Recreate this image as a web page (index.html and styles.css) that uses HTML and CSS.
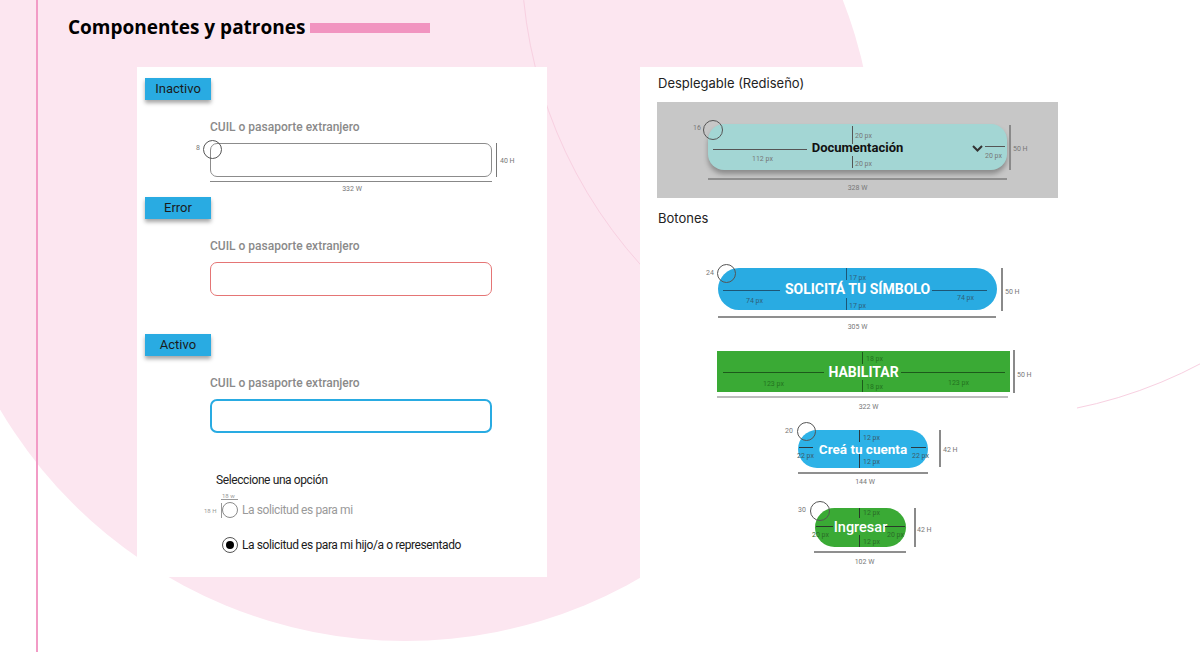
FILE: index.html
```html
<!DOCTYPE html>
<html lang="es">
<head>
<meta charset="utf-8">
<title>Componentes y patrones</title>
<link rel="stylesheet" href="styles.css">
</head>
<body>
<div class="page">
  <div class="bg-circle"></div>
  <div class="bg-arc"></div>
  <div class="frame">
    <header class="title-row">
      <h1 class="title">Componentes y patrones</h1>
      <span class="title-bar"></span>
    </header>
    <div class="boards">
      <section class="card card-left">
        <div class="state">
          <span class="tag">Inactivo</span>
          <span class="field-label">CUIL o pasaporte extranjero</span>
          <div class="field field-inactive">
            <span class="ring f-ring"></span><span class="mt f-r">8</span>
            <span class="mk f-ht"></span><span class="mt f-ht-t">40 H</span>
            <span class="mk f-wd"></span><span class="mt f-wd-t">332 W</span>
          </div>
        </div>
        <div class="state">
          <span class="tag">Error</span>
          <span class="field-label">CUIL o pasaporte extranjero</span>
          <div class="field field-error"></div>
        </div>
        <div class="state state-active">
          <span class="tag">Activo</span>
          <span class="field-label">CUIL o pasaporte extranjero</span>
          <div class="field field-active"></div>
        </div>
        <div class="options">
          <div class="options-title">Seleccione una opción</div>
          <div class="radio-row radio-row-off">
            <span class="radio">
              <span class="mt r-w">18 w</span><span class="mk r-wl"></span>
              <span class="mt r-h">18 H</span><span class="mk r-hl"></span>
            </span>
            <span>La solicitud es para mi</span>
          </div>
          <div class="radio-row radio-row-on">
            <span class="radio radio-on"></span>
            <span>La solicitud es para mi hijo/a o representado</span>
          </div>
        </div>
      </section>

      <section class="card card-right">
        <h2 class="section-title">Desplegable (Rediseño)</h2>
        <div class="dd-box">
          <div class="dropdown">
            <span>Documentación</span>
            <span class="ring dd-ring"></span><span class="mt dd-r">16</span>
            <span class="mk dd-ln dd-vt"></span><span class="mt dd-vt-t">20 px</span>
            <span class="mk dd-ln dd-vb"></span><span class="mt dd-vb-t">20 px</span>
            <span class="mk dd-ln dd-hl"></span><span class="mt dd-hl-t">112 px</span>
            <svg class="chev" width="11" height="7" viewBox="0 0 11 7"><polyline points="1,1 5.5,5.5 10,1" fill="none" stroke="#333" stroke-width="2"/></svg>
            <span class="mk dd-ln dd-hr"></span><span class="mt dd-hr-t">20 px</span>
            <span class="mk out-v dd-ht"></span><span class="mt dd-ht-t">50 H</span>
            <span class="mk out-h dd-wd"></span><span class="mt wd-t dd-wd-t">328 W</span>
          </div>
        </div>
        <h2 class="section-title botones">Botones</h2>

        <div class="btn btn-solicita">
          <span>SOLICITÁ TU SÍMBOLO</span>
          <span class="ring b1-ring"></span><span class="mt b1-r">24</span>
          <span class="mk b1-ln b1-vt"></span><span class="mt b1-t b1-vt-t">17 px</span>
          <span class="mk b1-ln b1-vb"></span><span class="mt b1-t b1-vb-t">17 px</span>
          <span class="mk b1-ln b1-hl"></span><span class="mt b1-t b1-hl-t">74 px</span>
          <span class="mk b1-ln b1-hr"></span><span class="mt b1-t b1-hr-t">74 px</span>
          <span class="mk out-v b1-ht"></span><span class="mt b1-ht-t">50 H</span>
          <span class="mk out-h b1-wd"></span><span class="mt wd-t b1-wd-t">305 W</span>
        </div>

        <div class="btn btn-habilitar">
          <span>HABILITAR</span>
          <span class="mk b2-ln b2-vt"></span><span class="mt b2-t b2-vt-t">18 px</span>
          <span class="mk b2-ln b2-vb"></span><span class="mt b2-t b2-vb-t">18 px</span>
          <span class="mk b2-ln b2-hl"></span><span class="mt b2-t b2-hl-t">123 px</span>
          <span class="mk b2-ln b2-hr"></span><span class="mt b2-t b2-hr-t">123 px</span>
          <span class="mk out-v b2-ht"></span><span class="mt b2-ht-t">50 H</span>
          <span class="mk out-h b2-wd"></span><span class="mt wd-t b2-wd-t">322 W</span>
        </div>

        <div class="btn btn-crea">
          <span>Creá tu cuenta</span>
          <span class="ring b3-ring"></span><span class="mt b3-r">20</span>
          <span class="mk b3-ln b3-vt"></span><span class="mt b3-t b3-vt-t">12 px</span>
          <span class="mk b3-ln b3-vb"></span><span class="mt b3-t b3-vb-t">12 px</span>
          <span class="mk b3-ln b3-hl"></span><span class="mt b3-t b3-hl-t">22 px</span>
          <span class="mk b3-ln b3-hr"></span><span class="mt b3-t b3-hr-t">22 px</span>
          <span class="mk out-v b3-ht"></span><span class="mt b3-ht-t">42 H</span>
          <span class="mk out-h b3-wd"></span><span class="mt wd-t b3-wd-t">144 W</span>
        </div>

        <div class="btn btn-ingresar">
          <span>Ingresar</span>
          <span class="ring b4-ring"></span><span class="mt b4-r">30</span>
          <span class="mk b4-ln b4-vt"></span><span class="mt b4-t b4-vt-t">12 px</span>
          <span class="mk b4-ln b4-vb"></span><span class="mt b4-t b4-vb-t">12 px</span>
          <span class="mk b4-ln b4-hl"></span><span class="mt b4-t b4-hl-t">20 px</span>
          <span class="mk b4-ln b4-hr"></span><span class="mt b4-t b4-hr-t">20 px</span>
          <span class="mk out-v b4-ht"></span><span class="mt b4-ht-t">42 H</span>
          <span class="mk out-h b4-wd"></span><span class="mt wd-t b4-wd-t">102 W</span>
        </div>
      </section>
    </div>
  </div>
</div>
</body>
</html>
```
FILE: styles.css
```css
* { box-sizing: border-box; }
body { margin: 0; font-family: Roboto, "Liberation Sans", sans-serif; }

.page { position: relative; width: 1200px; height: 652px; overflow: hidden; background: #fff; }

/* decorative background */
.bg-circle { position: absolute; left: -65px; top: -299px; width: 940px; height: 940px; border-radius: 50%; background: #fce6f0; }
.bg-arc { position: absolute; left: 521px; top: -508px; width: 926px; height: 926px; border-radius: 50%; border: 1.5px solid #f8d0e1; }

.frame { position: relative; z-index: 1; margin-left: 36px; height: 652px; border-left: 2px solid #f29bc6; }

.title-row { display: flex; align-items: flex-start; gap: 5px; height: 67px; padding: 15px 0 0 30px; }
.title { margin: 0; font: 700 19px/24px "Open Sans", sans-serif; color: #000; }
.title-bar { width: 120px; height: 10px; margin-top: 8px; background: #f194c0; }

.boards { display: flex; gap: 93px; padding-left: 99px; }
.card { background: #fff; }
.card-left { width: 410px; height: 510px; padding: 11px 0 0 8px; }
.card-right { width: 437px; height: 585px; padding-top: 8px; }

/* left card */
.state + .state { margin-top: 20px; }
.state.state-active { margin-top: 38px; }
.tag { display: block; width: 66px; height: 22px; background: #29abe2; color: #1b1b1b; font-size: 13px; line-height: 22px; text-align: center; box-shadow: 0 3px 4px rgba(0,0,0,0.35); }
.field-label { display: block; margin: 20px 0 0 65px; font-size: 12px; line-height: 15px; font-weight: 500; color: #8a8a8a; }
.field { position: relative; width: 282px; height: 34px; margin: 8px 0 0 65px; border-radius: 7px; background: #fff; }
.field-inactive { border: 1px solid #8c8c8c; }
.field-error { border: 1.5px solid #e57575; }
.field-active { border: 2px solid #29abe2; }

.options { margin: 40px 0 0 71px; letter-spacing: -0.4px; }
.options-title { font-size: 12px; line-height: 15px; color: #222; }
.radio-row { display: flex; align-items: center; gap: 4px; height: 18px; margin-left: 6px; font-size: 12px; }
.radio-row-off { margin-top: 13px; color: #9a9a9a; }
.radio-row-on { margin-top: 17px; color: #1a1a1a; }
.radio { position: relative; flex: none; width: 16px; height: 16px; border-radius: 50%; border: 1.2px solid #8a8a8a; letter-spacing: 0; }
.radio-on { border: 1.5px solid #555; }
.radio-on::after { content: ""; position: absolute; left: 50%; top: 50%; width: 8px; height: 8px; margin: -4px 0 0 -4px; border-radius: 50%; background: #000; }

/* annotation primitives */
.mk { position: absolute; display: block; background: #555; }
.mt { position: absolute; font: 400 7px/8px Roboto, sans-serif; color: #777; white-space: nowrap; letter-spacing: 0; }
.ring { position: absolute; border: 1px solid #555; border-radius: 50%; }
.out-v { width: 1.5px; background: #8a8a8a; }
.out-h { height: 1.5px; background: #8f8f8f; }
.wd-t { left: 0; right: 0; text-align: center; }

/* field annotations */
.f-ring { left: -8px; top: -4px; width: 19px; height: 19px; }
.f-r { left: -15px; top: 0; }
.f-ht { left: 285px; top: -1px; width: 1px; height: 34px; background: #777; }
.f-ht-t { left: 289px; top: 13px; }
.f-wd { left: -1px; top: 37px; width: 282px; height: 1px; background: #888; }
.f-wd-t { left: 0; width: 282px; top: 41px; text-align: center; }

/* radio annotations */
.r-w { left: -1px; top: -11px; font-size: 6px; color: #999; }
.r-wl { left: -2px; top: -4px; width: 17px; height: 1px; background: #999; }
.r-h { left: -19px; top: 4px; font-size: 6px; color: #999; }
.r-hl { left: -2px; top: 0; width: 1px; height: 15px; background: #999; }

/* right card */
.section-title { margin: 0 0 0 18px; font: 400 13px/16px Inter, Roboto, sans-serif; color: #222; }
.section-title.botones { margin-top: 12px; }
.dd-box { width: 401px; height: 96px; margin: 11px 0 0 17px; padding: 22px 0 0 51px; background: #c7c7c7; }
.dropdown { position: relative; display: flex; align-items: center; justify-content: center; width: 299px; height: 46px; border-radius: 16px; background: #a3d6d4; box-shadow: 0 4px 5px rgba(0,0,0,0.3); font-weight: 700; font-size: 13px; color: #111; padding-top: 1px; }
.chev { position: absolute; left: 264px; top: 21px; }

.dd-ln { background: #555; }
.dd-ring { left: -5px; top: -4px; width: 20px; height: 20px; }
.dd-r { left: -15px; top: 0; }
.dd-vt { left: 144px; top: 2px; width: 1px; height: 18px; }
.dd-vt-t { left: 147px; top: 8px; }
.dd-vb { left: 144px; top: 32px; width: 1px; height: 12px; }
.dd-vb-t { left: 147px; top: 36px; }
.dd-hl { left: 5px; top: 25px; width: 94px; height: 1px; }
.dd-hl-t { left: 44px; top: 31px; }
.dd-hr { left: 277px; top: 22px; width: 20px; height: 1px; }
.dd-hr-t { left: 277px; top: 28px; }
.dd-ht { left: 301px; top: 1px; height: 45px; }
.dd-ht-t { left: 305px; top: 21px; }
.dd-wd { left: 0; top: 54px; width: 299px; }
.dd-wd-t { top: 60px; }

/* buttons */
.btn { position: relative; display: flex; align-items: center; justify-content: center; color: #fff; font-weight: 700; }
.btn-solicita { width: 279px; height: 42px; margin: 42px 0 0 78px; border-radius: 21px; background: #29abe2; font-size: 14px; }
.btn-habilitar { width: 293px; height: 41px; margin: 41px 0 0 77px; background: #3aaa35; font-size: 14px; }
.btn-crea { width: 130px; height: 38px; margin: 38px 0 0 158px; border-radius: 19px; background: #2db2e7; font-size: 13.5px; }
.btn-ingresar { width: 91px; height: 39px; margin: 40px 0 0 175px; border-radius: 20px; background: #3aaa35; font-size: 14.5px; font-weight: 500; }

.b1-ln { background: #1d5676; }
.b1-t { color: #2f5f78; }
.b1-ring { left: -1px; top: -4px; width: 19px; height: 19px; }
.b1-r { left: -12px; top: 1px; }
.b1-vt { left: 128px; top: 0; width: 1px; height: 12px; }
.b1-vt-t { left: 131px; top: 6px; }
.b1-vb { left: 128px; top: 30px; width: 1px; height: 12px; }
.b1-vb-t { left: 131px; top: 34px; }
.b1-hl { left: 5px; top: 22px; width: 57px; height: 1px; }
.b1-hl-t { left: 28px; top: 29px; }
.b1-hr { left: 214px; top: 22px; width: 55px; height: 1px; }
.b1-hr-t { left: 239px; top: 26px; }
.b1-ht { left: 283px; top: 0; height: 43px; }
.b1-ht-t { left: 287px; top: 20px; }
.b1-wd { left: 0; top: 48px; width: 278px; }
.b1-wd-t { top: 55px; }

.b2-ln { background: #1d5a1b; }
.b2-t { color: #23731f; }
.b2-vt { left: 145px; top: 1px; width: 1px; height: 12px; }
.b2-vt-t { left: 149px; top: 4px; }
.b2-vb { left: 145px; top: 29px; width: 1px; height: 12px; }
.b2-vb-t { left: 149px; top: 32px; }
.b2-hl { left: 6px; top: 21px; width: 101px; height: 1px; }
.b2-hl-t { left: 46px; top: 29px; }
.b2-hr { left: 184px; top: 21px; width: 104px; height: 1px; }
.b2-hr-t { left: 231px; top: 28px; }
.b2-ht { left: 296px; top: -1px; height: 43px; width: 2px; }
.b2-ht-t { left: 300px; top: 20px; }
.b2-wd { left: 0; top: 45px; width: 291px; height: 2px; background: #bdbdbd; }
.b2-wd-t { top: 52px; padding-left: 10px; }

.b3-ln { background: #2b3a42; }
.b3-t { color: #3b5a6a; }
.b3-ring { left: -1px; top: -8px; width: 19px; height: 19px; }
.b3-r { left: -13px; top: -3px; }
.b3-vt { left: 61px; top: 0; width: 1px; height: 12px; }
.b3-vt-t { left: 65px; top: 4px; }
.b3-vb { left: 61px; top: 24px; width: 1px; height: 14px; }
.b3-vb-t { left: 65px; top: 28px; }
.b3-hl { left: 1px; top: 17px; width: 14px; height: 1px; }
.b3-hl-t { left: -1px; top: 22px; }
.b3-hr { left: 113px; top: 17px; width: 15px; height: 1px; }
.b3-hr-t { left: 114px; top: 22px; }
.b3-ht { left: 141px; top: 0; height: 37px; }
.b3-ht-t { left: 145px; top: 16px; }
.b3-wd { left: 0; top: 42px; width: 130px; }
.b3-wd-t { top: 48px; padding-left: 4px; }

.b4-ln { background: #2a3a2a; }
.b4-t { color: #2a6a28; }
.b4-ring { left: -5px; top: -7px; width: 20px; height: 20px; }
.b4-r { left: -17px; top: -2px; }
.b4-vt { left: 44px; top: 0; width: 1px; height: 10px; }
.b4-vt-t { left: 48px; top: 1px; }
.b4-vb { left: 44px; top: 27px; width: 1px; height: 12px; }
.b4-vb-t { left: 48px; top: 30px; }
.b4-hl { left: 1px; top: 18px; width: 17px; height: 1px; }
.b4-hl-t { left: -3px; top: 23px; }
.b4-hr { left: 70px; top: 18px; width: 20px; height: 1px; }
.b4-hr-t { left: 72px; top: 23px; }
.b4-ht { left: 99px; top: 0; height: 39px; }
.b4-ht-t { left: 102px; top: 18px; }
.b4-wd { left: -1px; top: 43px; width: 92px; }
.b4-wd-t { top: 50px; padding-left: 8px; }
```
